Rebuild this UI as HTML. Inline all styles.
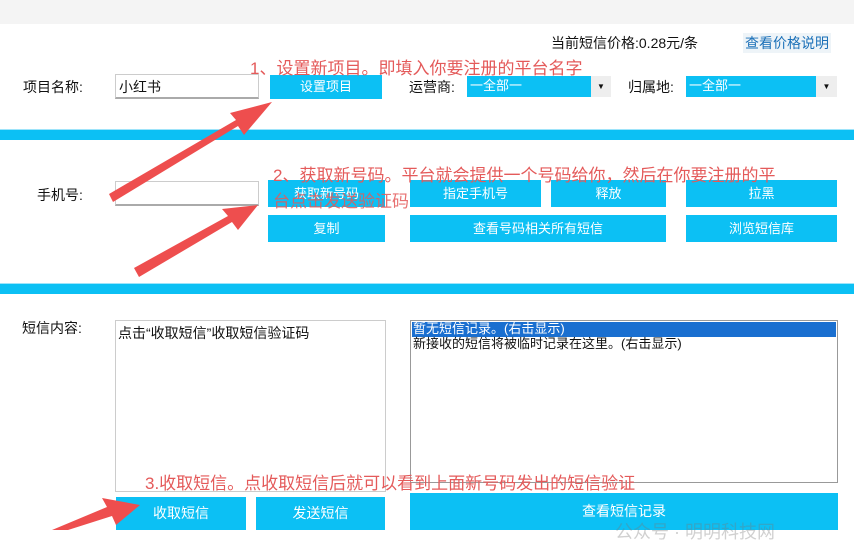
<!DOCTYPE html>
<html><head><meta charset="utf-8"><style>
body{margin:0;width:854px;height:530px;overflow:hidden;background:#fff;position:relative;font-family:"Liberation Sans","Noto Sans CJK SC",sans-serif;font-size:13px;color:#111}
div,span{position:absolute;box-sizing:border-box}
.b{background:#0cc0f4;color:#fff;text-align:center;font-size:13px}
.inp{background:#fff;border:1px solid #ccc;border-bottom:2px solid #aaa}
.r{color:#e45a5a;font-size:17px;white-space:nowrap}
.band{left:0;width:854px;background:#0cc0f4;height:11px;border-top:1px solid #9ee4fa}
.l{font-size:14px}
</style></head><body>
<div style="left:0;top:0;width:854px;height:24px;background:#f4f4f4"></div>
<div style="left:551px;top:33px;font-size:14px">当前短信价格:0.28元/条</div>
<div style="left:743px;top:33px;color:#1b70b8;background:#eef4f8;padding:0 2px;font-size:14px">查看价格说明</div>
<div class="l" style="left:23px;top:77px">项目名称:</div>
<div class="inp" style="left:115px;top:74px;width:144px;height:25px;padding:2px 3px;font-size:14px">小红书</div>
<div class="b" style="left:270px;top:75px;width:112px;height:24px;line-height:24px">设置项目</div>
<div class="l" style="left:409px;top:77px">运营商:</div>
<div class="b" style="left:467px;top:76px;width:124px;height:21px;line-height:20px;text-align:left;padding-left:3px">一全部一</div>
<div style="left:591px;top:76px;width:20px;height:21px;background:#eee;text-align:center;font-size:8px;line-height:21px">▼</div>
<div class="l" style="left:628px;top:77px">归属地:</div>
<div class="b" style="left:686px;top:76px;width:130px;height:21px;line-height:20px;text-align:left;padding-left:3px">一全部一</div>
<div style="left:816px;top:76px;width:21px;height:21px;background:#eee;text-align:center;font-size:8px;line-height:21px">▼</div>
<div class="band" style="top:129px"></div>
<div class="l" style="left:37px;top:185px">手机号:</div>
<div class="inp" style="left:115px;top:181px;width:144px;height:25px"></div>
<div class="b" style="left:268px;top:180px;width:117px;height:27px;line-height:27px">获取新号码</div>
<div class="b" style="left:410px;top:180px;width:131px;height:27px;line-height:27px">指定手机号</div>
<div class="b" style="left:551px;top:180px;width:115px;height:27px;line-height:27px">释放</div>
<div class="b" style="left:686px;top:180px;width:151px;height:27px;line-height:27px">拉黑</div>
<div class="b" style="left:268px;top:215px;width:117px;height:27px;line-height:27px">复制</div>
<div class="b" style="left:410px;top:215px;width:256px;height:27px;line-height:27px">查看号码相关所有短信</div>
<div class="b" style="left:686px;top:215px;width:151px;height:27px;line-height:27px">浏览短信库</div>
<div class="band" style="top:283px"></div>
<div class="l" style="left:22px;top:318px">短信内容:</div>
<div style="left:115px;top:320px;width:271px;height:172px;border:1px solid #ccc;padding:2px 2px;font-size:14px">点击“收取短信”收取短信验证码</div>
<div style="left:410px;top:320px;width:428px;height:163px;border:1px solid #999"></div>
<div style="left:412px;top:322px;width:424px;height:15px;background:#1a6fd0;color:#fff;line-height:14px;padding-left:1px">暂无短信记录。(右击显示)</div>
<div style="left:413px;top:336px;line-height:15px">新接收的短信将被临时记录在这里。(右击显示)</div>
<div class="b" style="left:116px;top:497px;width:130px;height:33px;line-height:33px;font-size:14px">收取短信</div>
<div class="b" style="left:256px;top:497px;width:129px;height:33px;line-height:33px;font-size:14px">发送短信</div>
<div class="b" style="left:410px;top:493px;width:428px;height:37px;line-height:37px;font-size:14px">查看短信记录</div>
<div style="left:615px;top:518px;color:rgba(120,120,120,.35);font-size:18px">公众号 · 明明科技网</div>
<div class="r" style="left:250px;top:54px">1、设置新项目。即填入你要注册的平台名字</div>
<div class="r" style="left:273px;top:161px">2、获取新号码。平台就会提供一个号码给你，然后在你要注册的平</div>
<div class="r" style="left:273px;top:187px;opacity:.85">台点击发送验证码</div>
<div class="r" style="left:145px;top:469px">3.收取短信。点收取短信后就可以看到上面新号码发出的短信验证</div>
<svg style="position:absolute;left:0;top:0" width="854" height="530">
<g fill="#ee4e4e">
<polygon points="109,194 113,202 238,126 244,135 272,102 230,113 236,120"/>
<polygon points="134,268 139,277 232,222 238,230 258,205 222,209 228,216"/>
<polygon points="52,530 68,530 112,516 116,525 140,505 102,498 107,507"/>
</g></svg>
</body></html>
